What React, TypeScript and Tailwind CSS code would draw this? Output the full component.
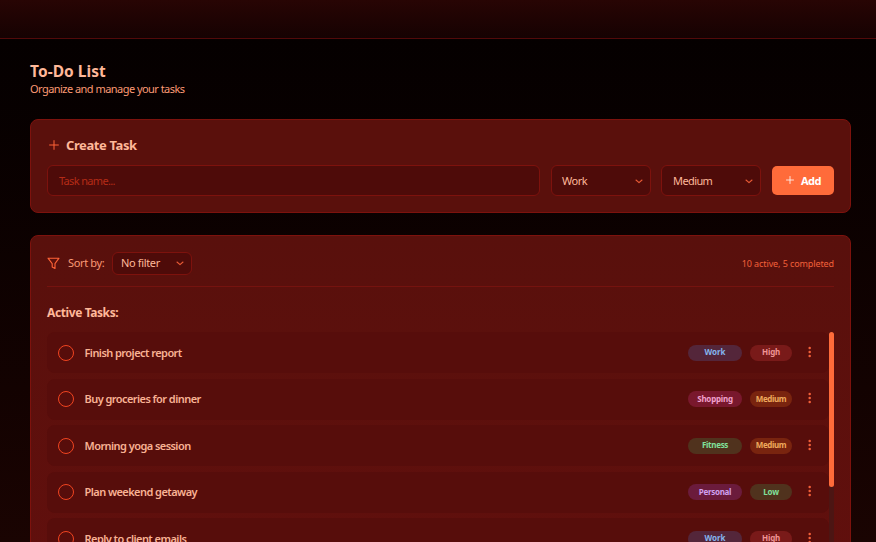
import React from 'react';
import clsx from 'clsx';

type Tone = { label: string; style: string };

const categories: Record<string, Tone> = {
  work: { label: 'Work', style: 'bg-[#54263a] text-[#85b5ee]' },
  shopping: { label: 'Shopping', style: 'bg-[#79182d] text-[#f0a0cc] tracking-[-0.22px]' },
  fitness: { label: 'Fitness', style: 'bg-[#50321d] text-[#80e09a] tracking-[-0.3px]' },
  personal: { label: 'Personal', style: 'bg-[#6b1b3c] text-[#d0a0f0] tracking-[-0.3px]' },
};

const priorities: Record<string, Tone> = {
  high: { label: 'High', style: 'bg-[#791a19] text-[#f09494] tracking-[-0.2px]' },
  medium: { label: 'Medium', style: 'bg-[#79240f] text-[#eea95c] tracking-[-0.4px]' },
  low: { label: 'Low', style: 'bg-[#50321d] text-[#80e09a] tracking-[-0.2px]' },
};

const tasks = [
  { name: 'Finish project report', category: 'work', priority: 'high' },
  { name: 'Buy groceries for dinner', category: 'shopping', priority: 'medium' },
  { name: 'Morning yoga session', category: 'fitness', priority: 'medium' },
  { name: 'Plan weekend getaway', category: 'personal', priority: 'low' },
  { name: 'Reply to client emails', category: 'work', priority: 'high' },
];

function Plus({ className }: { className?: string }) {
  return (
    <svg viewBox="0 0 10 10" className={clsx('shrink-0', className)} fill="none" stroke="currentColor" strokeLinecap="round">
      <path d="M5 .6v8.8M.6 5h8.8" />
    </svg>
  );
}

function Select({ value, className }: { value: string; className: string }) {
  return (
    <button className={clsx('flex shrink-0 items-center justify-between rounded-[6px] border border-[#7d120d] bg-[#4e0b09] text-[11px] text-[#ffb899]', className)}>
      <span>{value}</span>
      <svg viewBox="0 0 8 5" className="h-[5px] w-2" fill="none" stroke="#e85a35" strokeWidth="1.1" strokeLinecap="round" strokeLinejoin="round">
        <path d="M1 1l3 2.7L7 1" />
      </svg>
    </button>
  );
}

function Badge({ tone, className }: { tone: Tone; className: string }) {
  return (
    <span className={clsx('flex h-4 shrink-0 items-center justify-center rounded-full pb-px text-[8px] font-bold', tone.style, className)}>
      {tone.label}
    </span>
  );
}

export default function App() {
  return (
    <div className="flex h-[542px] w-full flex-col overflow-hidden bg-linear-to-b from-[#040000] to-[#1a0402] font-['Noto_Sans','Open_Sans',sans-serif]">
      <header className="h-[39px] shrink-0 border-b border-[#520a0a] bg-linear-to-b from-[#280504] to-[#160202]" />
      <main className="flex min-h-0 flex-1 flex-col pl-[30px] pr-[25px] pt-[21px]">
        <h1 className="h-[22px] text-[15.5px] font-bold leading-[22px] tracking-[0.05px] text-[#ffb899]">To-Do List</h1>
        <p className="h-[14px] text-[11px] leading-[14px] tracking-[-0.54px] text-[#fb9a74]">Organize and manage your tasks</p>

        <section className="mt-[23px] h-[94px] shrink-0 rounded-[8px] border border-[#7d120d] bg-[#5a100c] px-4 pt-4">
          <h2 className="flex h-[18px] items-center gap-[7px] pl-[2px] text-[13px] font-bold leading-[18px] tracking-[-0.4px] text-[#ffb899]">
            <Plus className="h-[10px] w-[10px] text-[#ff6236]" />
            Create Task
          </h2>
          <div className="mt-[11px] flex items-center">
            <input
              className="h-[31px] w-[493px] rounded-[6px] border border-[#7d120d] bg-[#4e0b09] px-[11px] text-[11px] tracking-[-0.65px] text-[#ffb899] outline-none placeholder:text-[#b52b17]"
              placeholder="Task name..."
            />
            <Select value="Work" className="ml-[11px] h-[31px] w-[100px] pl-[10px] pr-[7px] pt-px tracking-[-0.45px]" />
            <Select value="Medium" className="ml-[10px] h-[31px] w-[100px] pl-[11px] pr-[7px] pt-px tracking-[-0.6px]" />
            <button className="ml-[11px] flex h-[29px] w-[62px] items-center rounded-[5px] bg-[#ff6b3a] pl-[14px] text-[11px] font-bold tracking-[-0.5px] text-white">
              <Plus className="mr-[7px] mb-px h-2 w-2" />
              <span className="pt-px">Add</span>
            </button>
          </div>
        </section>

        <section className="mt-[22px] flex h-[400px] shrink-0 flex-col rounded-[8px] border border-[#7d120d] bg-linear-to-b from-[#59100c] to-[#620f0d] px-4 pt-4">
          <div className="flex h-[35px] shrink-0 items-start border-b border-[#75130f]">
            <div className="flex h-[23px] w-full items-center">
              <svg viewBox="0 0 13 13" className="h-[13px] w-[13px]" fill="none" stroke="#ff6236" strokeWidth="1.1" strokeLinejoin="round">
                <path d="M1 1.2h11L8 6.6v4.9L5.2 10V6.6z" />
              </svg>
              <span className="ml-2 w-[44px] whitespace-nowrap text-[11px] tracking-[-0.35px] text-[#fb9a74]">Sort by:</span>
              <Select value="No filter" className="h-[23px] w-[80px] pl-[8px] pr-[7px] tracking-[-0.35px]" />
              <span className="ml-auto text-[9px] tracking-[-0.1px] text-[#f2603a]">10 active, 5 completed</span>
            </div>
          </div>
          <h3 className="mt-[17px] h-[18px] shrink-0 text-[12px] font-bold leading-[18px] tracking-[-0.4px] text-[#ffb899]">Active Tasks:</h3>
          <div className="mt-[10px] flex min-h-0 flex-1">
            <ul className="flex w-[782px] flex-col gap-[5.5px]">
              {tasks.map((task) => (
                <li key={task.name} className="flex h-[41px] shrink-0 items-center rounded-[8px] bg-[#570d0b] pl-[11px]">
                  <span className="h-4 w-4 shrink-0 rounded-full border border-[#f04420]" />
                  <span className="ml-[10.5px] flex-1 pt-px text-[11px] font-semibold tracking-[-0.56px] text-[#f9b294]">{task.name}</span>
                  <Badge tone={categories[task.category]} className="w-[54px]" />
                  <Badge tone={priorities[task.priority]} className="ml-2 w-[42px]" />
                  <svg viewBox="0 0 4 12" className="ml-4 mr-[17px] mb-[2px] h-3 w-1 shrink-0" fill="#f2603a">
                    <circle cx="1.7" cy="2" r="1.25" />
                    <circle cx="1.7" cy="6" r="1.25" />
                    <circle cx="1.7" cy="10" r="1.25" />
                  </svg>
                </li>
              ))}
            </ul>
            <div className="w-[5px] shrink-0 rounded-full bg-[#4c1513]">
              <div className="h-[155px] rounded-full bg-[#ff6b3a]" />
            </div>
          </div>
        </section>
      </main>
    </div>
  );
}
